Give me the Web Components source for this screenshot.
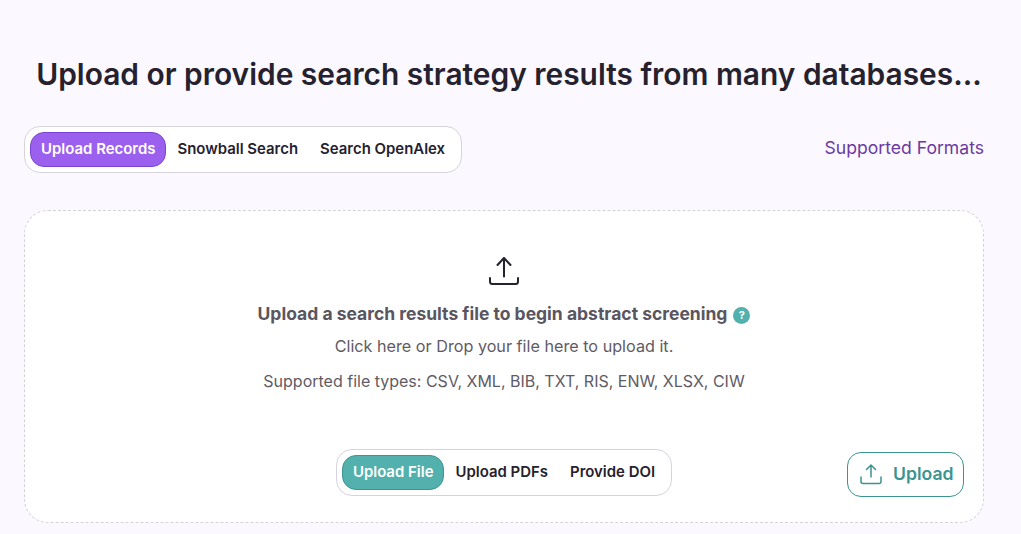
<!DOCTYPE html>
<html><head><meta charset="utf-8">
<style>
html,body{margin:0;padding:0;height:534px;overflow:hidden;background:#fbf9ff;font-family:Inter,"Liberation Sans",sans-serif;color:#25212e}
</style></head><body>
<app-page></app-page>
<template id="tabs-t"><style>
:host{display:inline-flex;box-sizing:border-box;height:47px;padding:5px;background:#fff;border:1px solid #d6d3dc;border-radius:16px;align-items:stretch;font:600 14.95px/20px Inter,sans-serif;color:#25212e}
</style><slot></slot></template>
<template id="tab-t"><style>
:host{display:flex;align-items:center;justify-content:center;box-sizing:border-box;height:35px;border:1px solid transparent;border-radius:14px;padding:0 10px 2px;white-space:nowrap}
:host([active]){background:var(--tab-bg);border-color:var(--tab-border);color:#fff}
</style><slot></slot></template>
<template id="page-t"><style>
:host{display:block;box-sizing:border-box;width:1021px;padding:0 37px 0 24px}
h1{margin:0;padding:55px 0 0 10px;height:71px;font:600 29.9px/38px Inter,sans-serif;color:#25212e;text-align:center;white-space:nowrap;box-sizing:content-box}
.row{display:flex;justify-content:space-between;align-items:center;height:47px}
.formats{font:400 17.6px/24px Inter,sans-serif;color:#6c3a9e;margin-top:-3px}
.tabs-a{--tab-bg:#9c60ef;--tab-border:#7a45cf}
.tabs-b{--tab-bg:#53b1ad;--tab-border:#3f958f}
</style>
<h1>Upload or provide search strategy results from many databases...</h1>
<div class="row">
<tab-bar class="tabs-a"><tab-item active>Upload Records</tab-item><tab-item>Snowball Search</tab-item><tab-item>Search OpenAlex</tab-item></tab-bar>
<span class="formats">Supported Formats</span>
</div>
<drop-zone>
<tab-bar class="tabs-b" slot="tabs"><tab-item active>Upload File</tab-item><tab-item>Upload PDFs</tab-item><tab-item>Provide DOI</tab-item></tab-bar>
<upload-button slot="action">Upload</upload-button>
</drop-zone>
</template>
<template id="zone-t"><style>
:host{display:flex;flex-direction:column;align-items:center;box-sizing:border-box;width:960px;height:313px;margin-top:37px;background:#fff;border:1px dashed #d3d2d8;border-radius:24px;padding-top:44px;text-align:center}
svg.up{display:block;width:32px;height:32px;color:#25212e}
h2{margin:14px 0 0;font:700 17.5px/26px Inter,sans-serif;color:#5a5660;display:flex;align-items:center;gap:6px;white-space:nowrap}
.q{width:17px;height:17px;border-radius:50%;background:#53b1ad;color:#fff;font:700 11px/17px Inter,sans-serif;display:inline-block;margin-top:2px}
p{margin:0;font:400 16px/22px Inter,sans-serif;color:#5f5b65;white-space:nowrap}
.p1{margin-top:8px;font-size:16.2px}.p2{margin-top:13px}
.bottom{display:grid;grid-template-columns:1fr auto 1fr;align-items:center;width:100%;box-sizing:border-box;padding:0 19px;margin-top:56px}
.bottom ::slotted([slot=tabs]){grid-column:2}
.end{justify-self:end;grid-column:3;margin-top:4px}
</style>
<svg class="up" viewBox="0 0 32 32" fill="none" stroke="currentColor" stroke-width="2" stroke-linecap="round" stroke-linejoin="round"><path d="M16 21.500V3M9.500 10 16 3l6.500 7M2 23v3.500A2.500 2.500 0 0 0 4.500 29h23a2.500 2.500 0 0 0 2.500-2.500V23"/></svg>
<h2>Upload a search results file to begin abstract screening <span class="q">?</span></h2>
<p class="p1">Click here or Drop your file here to upload it.</p>
<p class="p2">Supported file types: CSV, XML, BIB, TXT, RIS, ENW, XLSX, CIW</p>
<div class="bottom"><slot name="tabs"></slot><div class="end"><slot name="action"></slot></div></div>
</template>
<template id="btn-t"><style>
:host{display:flex;align-items:center;box-sizing:border-box;width:117px;height:45px;border:1px solid #3b9490;border-radius:14px;padding:0 0 1px 12px;gap:11px;background:#fff;color:#3b9490;font:600 17.6px/24px Inter,sans-serif}
svg{width:22px;height:22px;display:block}
</style><svg viewBox="0 0 22 22" fill="none" stroke="currentColor" stroke-width="1.500" stroke-linecap="round" stroke-linejoin="round"><path d="M11 14V2M6.500 6.500 11 2l4.500 4.500M1 14v4.500A2 2 0 0 0 3 20.500h16a2 2 0 0 0 2-2V14"/></svg><slot></slot></template>
<script>
const def=(n,t)=>customElements.define(n,class extends HTMLElement{constructor(){super();this.attachShadow({mode:'open'}).appendChild(document.getElementById(t).content.cloneNode(true))}});
def('tab-bar','tabs-t');def('tab-item','tab-t');def('upload-button','btn-t');def('drop-zone','zone-t');def('app-page','page-t');
</script>
</body></html>
